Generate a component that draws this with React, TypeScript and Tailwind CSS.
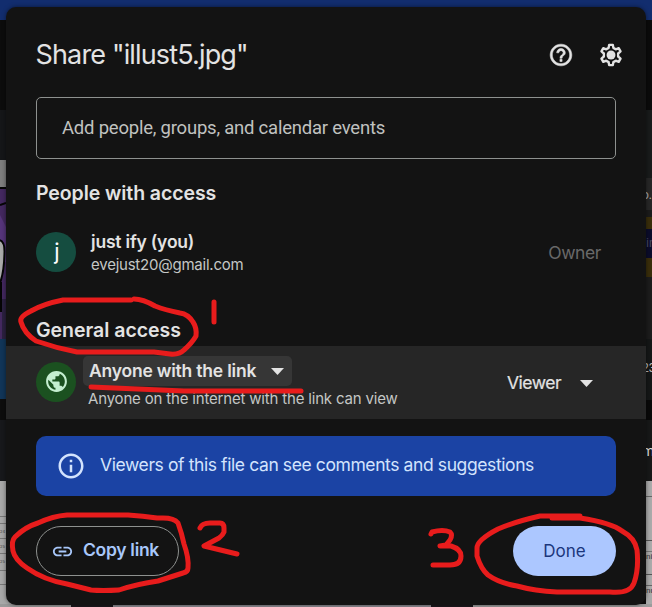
import type { ReactNode } from 'react';

type IconProps = { className?: string };

function HelpIcon({ className }: IconProps) {
  return (
    <svg viewBox="0 0 24 24" fill="currentColor" className={className}>
      <path stroke="currentColor" strokeWidth=".5" d="M11 18h2v-2h-2v2zm1-16C6.480 2 2 6.480 2 12s4.480 10 10 10 10-4.480 10-10S17.520 2 12 2zm0 18c-4.410 0-8-3.590-8-8s3.590-8 8-8 8 3.590 8 8-3.590 8-8 8zm0-14c-2.210 0-4 1.790-4 4h2c0-1.100.9-2 2-2s2 .9 2 2c0 2-3 1.750-3 5h2c0-2.250 3-2.500 3-5 0-2.210-1.790-4-4-4z" />
    </svg>
  );
}

function GearIcon({ className }: IconProps) {
  return (
    <svg viewBox="0 0 24 24" className={className}>
      <path
        fill="none"
        stroke="currentColor"
        strokeWidth="2.200"
        strokeLinejoin="round"
        d="M10.300 2.700h3.400l.5 2.700 2.200 1.300 2.700-1 1.700 3-2.200 1.900v2.800l2.200 1.900-1.700 3-2.700-1-2.200 1.300-.5 2.700h-3.400l-.5-2.700-2.200-1.300-2.700 1-1.700-3 2.200-1.900v-2.800L3.200 8.700l1.700-3 2.700 1 2.200-1.300.5-2.700z"
      />
      <circle cx="12" cy="12" r="4.100" fill="currentColor" />
    </svg>
  );
}

function GlobeIcon({ className }: IconProps) {
  return (
    <svg viewBox="0 0 24 24" fill="currentColor" className={className}>
      <path d="M12 2C6.480 2 2 6.480 2 12s4.480 10 10 10 10-4.480 10-10S17.520 2 12 2zm-1 17.930c-3.950-.49-7-3.850-7-7.930 0-.62.08-1.210.21-1.790L9 15v1c0 1.100.9 2 2 2v1.930zm6.900-2.540c-.26-.81-1-1.390-1.900-1.390h-1v-3c0-.55-.45-1-1-1H8v-2h2c.55 0 1-.45 1-1V7h2c1.100 0 2-.9 2-2v-.41c2.930 1.190 5 4.060 5 7.410 0 2.080-.8 3.970-2.100 5.390z" />
    </svg>
  );
}

function InfoIcon({ className }: IconProps) {
  return (
    <svg viewBox="0 0 24 24" fill="currentColor" className={className}>
      <path d="M11 7h2v2h-2zm0 4h2v6h-2zm1-9C6.480 2 2 6.480 2 12s4.480 10 10 10 10-4.480 10-10S17.520 2 12 2zm0 18c-4.410 0-8-3.590-8-8s3.590-8 8-8 8 3.590 8 8-3.590 8-8 8z" />
    </svg>
  );
}

function LinkIcon({ className }: IconProps) {
  return (
    <svg viewBox="0 0 24 24" fill="currentColor" className={className}>
      <path d="M3.900 12c0-1.710 1.390-3.100 3.100-3.100h4V7H7c-2.760 0-5 2.240-5 5s2.240 5 5 5h4v-1.900H7c-1.710 0-3.100-1.390-3.100-3.100zM8 13h8v-2H8v2zm9-6h-4v1.900h4c1.710 0 3.100 1.390 3.100 3.100s-1.390 3.100-3.100 3.100h-4V17h4c2.760 0 5-2.240 5-5s-2.240-5-5-5z" />
    </svg>
  );
}

function Caret({ className }: IconProps) {
  return (
    <svg viewBox="0 0 13 7" fill="currentColor" className={className}>
      <path d="M0 0h13L6.500 7z" />
    </svg>
  );
}

function Slice({ className, children }: { className: string; children?: ReactNode }) {
  return <div className={`flex w-full shrink-0 justify-between overflow-hidden ${className}`}>{children}</div>;
}

/* The page behind the dialog, visible only around its edges. */
function Backdrop() {
  return (
    <div className="absolute inset-0 flex flex-col bg-[#0d0d0d]">
      <Slice className="h-5 bg-[#122d6e]" />
      <div className="flex min-h-0 flex-1 justify-between">
        <div className="flex w-4 flex-col">
          <Slice className="h-[90px] bg-[#0c0c0c]" />
          <Slice className="h-[50px] bg-[#151618]" />
          <Slice className="h-[27px] bg-[#7e7e7e]" />
          <svg viewBox="0 0 6 152" className="h-[152px] w-[6px] shrink-0">
            <path fill="#43285f" d="M0 0h6v152H0z" />
            <path fill="#55347a" d="M0 28l6 12v35H0z" />
            <path fill="#2b2040" d="M2 112h4v40H2z" />
            <path stroke="#050505" strokeWidth="2" fill="none" d="M0 1h6M0 18l6-2" />
            <path fill="#aaa" stroke="#050505" strokeWidth="2" d="M-1 53q6 1 5.500 13Q4 88 -1 98z" />
            <path stroke="#050505" strokeWidth="2" d="M1 95v30" />
          </svg>
          <Slice className="h-[60px] bg-[#113558]" />
          <Slice className="h-[21px] bg-[#0d0d0d]" />
          <Slice className="h-[61px] bg-[#17181b]" />
          <div className="flex flex-1 flex-col bg-[#a8a8a8] text-[4px] leading-[16px] text-[#444]">
            <div className="h-9 border-b border-[#777]" />
            <div className="h-[7px] border-b border-[#777]" />
            <div className="h-[15px] border-b border-[#777]">24</div>
            <div className="h-[15px] border-b border-[#777]">25</div>
            <div className="h-[17px] border-b border-[#777]">25</div>
            <div className="h-[14px] border-b border-[#777]" />
          </div>
        </div>
        <div className="flex w-[6px] flex-col overflow-hidden font-['Roboto',sans-serif]">
          <Slice className="h-[90px] bg-[#0b0b0b]" />
          <Slice className="h-[68px] bg-[#191b1b]" />
          <Slice className="h-[32px] bg-[#272727] text-[12px] leading-[34px] text-[#aaa]"><span className="-ml-1">o.</span></Slice>
          <Slice className="h-[7px] bg-[#1b1b1b]" />
          <Slice className="h-[12px] bg-[#3a2e0b]" />
          <Slice className="h-[29px] bg-[#0b0c2b] text-[12px] leading-[29px] text-[#484860]">in</Slice>
          <Slice className="h-[19px] bg-[#3a2e0b]" />
          <Slice className="h-[62px] bg-[#1c1c1c]" />
          <Slice className="h-[61px] bg-[#151717] text-[12px] leading-[58px] text-[#b9b9b9]"><span className="-ml-1">23</span></Slice>
          <Slice className="h-[20px] bg-[#090909]" />
          <Slice className="h-[61px] bg-[#171818] text-[14px] leading-[62px] text-[#ddd]"><span className="-ml-1">m</span></Slice>
          <div className="flex flex-1 flex-col bg-[#aaa] text-[8px] leading-[10px] text-[#333]">
            <div className="h-4 border-b border-[#666]" />
            <div className="h-11 border-b border-[#555]" />
            <div className="h-[11px] border-b border-[#777]" />
            <div className="h-[23px] border-b border-[#555]">ni</div>
            <div className="h-[11px] border-b border-[#666]" />
            <div>nu</div>
          </div>
        </div>
      </div>
      <div className="flex h-[3px] shrink-0 justify-between bg-[#8d8b92]">
        <div className="h-full w-[71px] bg-[#9a9a9a]" />
        <div className="h-full w-[42px] bg-[#1c191d]" />
        <div className="h-full flex-1" />
        <div className="h-full w-[42px] bg-[#1c191d]" />
        <div className="h-full w-[179px] bg-[#9c9c9c]" />
      </div>
    </div>
  );
}

/* Hand-drawn red markings over the dialog. */
function Annotations() {
  return (
    <svg
      viewBox="0 0 652 607"
      className="pointer-events-none absolute inset-0 size-full"
      fill="none"
      stroke="#e81c1c"
      strokeWidth="5"
      strokeLinecap="round"
      strokeLinejoin="round"
    >
      <path d="M131 300H63Q43 304 31 311Q19 317 21 322Q24 333 36 341Q56 348 77 352H154L170 354Q179 355 184 350Q192 343 196 336Q197 328 193 322Q188 314 180 313Q165 310 155 306Q143 299 134 299" />
      <path d="M214 302V322" />
      <path d="M91 387Q140 389 184 391H301" />
      <path d="M163 518Q174 518 178 523Q182 534 184 544Q189 558 188 568Q188 572 183 573L158 581Q137 584 119 590Q102 591 91 590L67 584Q44 580 27 568Q15 560 13 551Q11 541 15 537Q25 527 38 523Q53 516 67 515H128Q143 516 157 518Z" />
      <path d="M200 528Q202 523 210 523H220Q224 523 224 528V532Q223 535 219 538L204 546L237 554" />
      <path d="M431 534L432 532Q443 529 450 532Q453 535 450 540L446 545L440 546H451Q461 549 461 556Q461 565 450 565H433" />
      <path d="M580 518H552M580 516H540Q514 522 498 529Q477 540 477 548V556Q481 569 488 575Q499 583 517 586Q535 591 557 592H610Q630 594 634 583Q639 569 637 550Q635 538 622 531Q612 523 580 518" />
    </svg>
  );
}

export default function App() {
  return (
    <div className="relative h-[607px] w-[652px] overflow-hidden font-['Inter','Roboto',sans-serif]">
      <Backdrop />
      <main className="relative mx-[6px] flex h-[605px] flex-col pt-[7px]">
        <div className="flex flex-1 flex-col rounded-[10px] bg-[#131313] text-[#e3e3e3] shadow-[0_0_4px_rgba(0,0,0,0.5)]">
          <header className="flex h-[90px] shrink-0 items-center justify-between pr-[22px] pl-[29.500px]">
            <h1 className="mt-[7px] text-[27px] tracking-[-0.850px] whitespace-nowrap">Share "illust5.jpg"</h1>
            <div className="mt-[5px] flex gap-6">
              <HelpIcon className="size-[26px]" />
              <GearIcon className="size-[26px]" />
            </div>
          </header>
          <div className="mx-[30px] flex h-[62px] shrink-0 items-center rounded-[5px] border border-[#8e918f] pt-px pl-[25px] font-['Roboto',sans-serif] text-[18.500px] tracking-[-0.220px] text-[#c0c2c0]">
            Add people, groups, and calendar events
          </div>
          <h2 className="mt-[22px] ml-[30px] h-6 text-[19.500px] leading-6 font-semibold tracking-[-0.080px]">People with access</h2>
          <section className="mt-[27px] flex h-10 items-center px-[30px]">
            <div className="flex size-10 items-center justify-center rounded-full bg-[#154d40] pb-px pl-[2px] text-[22px] text-white">j</div>
            <div className="ml-[15px] flex flex-col">
              <span className="text-[17.500px] leading-[23px] font-semibold tracking-[-0.200px]">just ify (you)</span>
              <span className="mt-px mb-[-1px] text-[15px] leading-[22px] tracking-[-0.230px] text-[#c4c7c5]">evejust20@gmail.com</span>
            </div>
            <span className="mt-[2px] mr-[15px] ml-auto text-[17.500px] tracking-[-0.400px] text-[#696969]">Owner</span>
          </section>
          <h2 className="mt-[46px] ml-[30px] h-6 text-[19.500px] leading-6 font-semibold tracking-[-0.020px]">General access</h2>
          <section className="mt-[4px] flex h-[73px] shrink-0 items-center bg-[#262626] pl-[30px]">
            <div className="mb-[2px] flex size-10 items-center justify-center rounded-full bg-[#1b5120] text-[#c4eed0]">
              <GlobeIcon className="size-[25px]" />
            </div>
            <div className="ml-[7px] flex flex-col">
              <button className="flex h-[30px] w-[209px] items-center rounded-[5px] bg-[#363636] pt-px pl-[6px] text-[17.500px] font-semibold tracking-[-0.210px] whitespace-nowrap">
                Anyone with the link
                <Caret className="mr-2 ml-auto h-[7px] w-[13px]" />
              </button>
              <span className="mt-[2px] ml-[5px] text-[15px] leading-[22px] tracking-[-0.180px] whitespace-nowrap text-[#c4c7c5]">Anyone on the internet with the link can view</span>
            </div>
            <button className="mt-px mr-[53px] ml-auto flex items-center gap-[19px] text-[17.500px] tracking-[-0.500px] [-webkit-text-stroke:0.2px]">
              Viewer
              <Caret className="h-[7px] w-[13px]" />
            </button>
          </section>
          <div className="mx-[30px] mt-[17px] flex h-[60px] shrink-0 items-center rounded-[10px] bg-[#1b43a4] pl-5 text-[#d3e3fd]">
            <InfoIcon className="size-[30px]" />
            <p className="mb-[2px] ml-[14px] text-[17.500px] tracking-[-0.400px] whitespace-nowrap">Viewers of this file can see comments and suggestions</p>
          </div>
          <footer className="mx-[30px] mt-[30px] flex h-[50px] justify-between">
            <button className="flex w-[143px] items-center rounded-full border border-[#8e918f] pl-[14px] text-[17.500px] font-semibold tracking-[-0.300px] text-[#a8c7fa]">
              <LinkIcon className="size-[23px]" />
              <span className="mb-px ml-[9px]">Copy link</span>
            </button>
            <button className="w-[103px] rounded-full bg-[#acc7ff] pt-px text-[17px] text-[#1b367c]">Done</button>
          </footer>
        </div>
      </main>
      <Annotations />
    </div>
  );
}
